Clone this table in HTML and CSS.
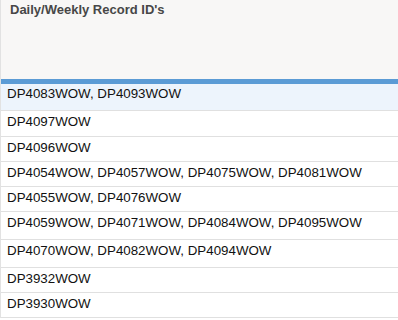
FILE: index.html
```html
<!DOCTYPE html>
<html>
<head>
<meta charset="utf-8">
<link rel="stylesheet" href="styles.css">
</head>
<body>
<div class="grid">
  <div class="head">Daily/Weekly Record ID's</div>
  <div class="row row-sel h26">DP4083WOW, DP4093WOW</div>
  <div class="row h25">DP4097WOW</div>
  <div class="row h24">DP4096WOW</div>
  <div class="row h24">DP4054WOW, DP4057WOW, DP4075WOW, DP4081WOW</div>
  <div class="row h24">DP4055WOW, DP4076WOW</div>
  <div class="row h27">DP4059WOW, DP4071WOW, DP4084WOW, DP4095WOW</div>
  <div class="row h27">DP4070WOW, DP4082WOW, DP4094WOW</div>
  <div class="row h24">DP3932WOW</div>
  <div class="row h24">DP3930WOW</div>
</div>
</body>
</html>
```
FILE: styles.css
```css
html, body {
  margin: 0;
  padding: 0;
  background: #ffffff;
}
.grid {
  display: flex;
  flex-direction: column;
  width: 398px;
  border-left: 1px solid #e2e2e2;
  box-sizing: border-box;
  font-family: "Liberation Sans", Arial, sans-serif;
  font-size: 13px;
  line-height: 16px;
}
.head {
  height: 77px;
  background: #f8f7f6;
  color: #474747;
  font-weight: bold;
  padding: 2px 0 0 9px;
  border-bottom: 5px solid #5b9bd5;
}
.row {
  box-sizing: content-box;
  padding: 3px 0 0 6px;
  color: #111111;
  font-size: 13.33px;
  border-bottom: 1px solid #e0e0e0;
  white-space: nowrap;
}
.row-sel {
  background: #edf4fc;
  padding-top: 2px;
}
.h26 { height: 24px; }
.h25 { height: 22px; }
.h24 { height: 21px; }
.h27 { height: 24px; }
```
